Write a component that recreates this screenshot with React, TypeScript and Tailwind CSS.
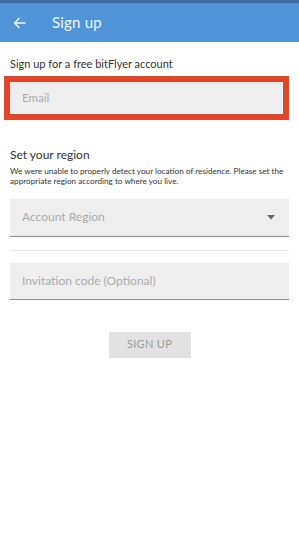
function App() {
  return (
    <div className="w-[299px] h-[544px] bg-white flex flex-col" style={{ fontFamily: "Lato, 'Open Sans', sans-serif" }}>
      <div className="h-[3px] bg-[#3d6d9f]" />
      <header className="h-[39px] bg-[#4f95d8] flex items-center">
        <svg className="ml-[13px]" width="13" height="12" viewBox="0 0 13 12" fill="none" stroke="#eaf3fc" strokeWidth="1.6" strokeLinecap="round" strokeLinejoin="round">
          <path d="M12 6H1.5M6 1.5L1.5 6L6 10.5" />
        </svg>
        <h1 className="ml-[26px] text-[15px] text-[#eef5fd] tracking-[0.2px]">Sign up</h1>
      </header>
      <p className="mt-[14px] ml-[10px] text-[11px] text-[#333]">Sign up for a free bitFlyer account</p>
      <div className="mt-[3px] mx-[4px] w-[285px] h-[44px] border-[6px] border-[#e1462b] bg-[#eeeeee] flex items-center px-[12px]">
        <span className="text-[11.5px] text-[#acacac]">Email</span>
      </div>
      <div className="mx-[10px] mt-[26px]">
        <h2 className="text-[12px] text-[#333]">Set your region</h2>
        <p className="mt-[2px] text-[8.2px] leading-[10px] text-[#333]">
          We were unable to properly detect your location of residence. Please set the appropriate region according to where you live.
        </p>
        <div className="mt-[13px] h-[38px] bg-[#eeeeee] border-b border-[#8d8d8d] flex items-center justify-between px-[12px]">
          <span className="text-[12px] text-[#acacac]">Account Region</span>
          <svg width="8" height="5" viewBox="0 0 8 5" className="mr-[2px]">
            <path d="M0 0H8L4 4.5Z" fill="#666" />
          </svg>
        </div>
        <div className="mt-[13px] h-px bg-[#e6e6e6]" />
        <div className="mt-[12px] h-[37px] bg-[#eeeeee] border-b border-[#8d8d8d] flex items-center px-[12px]">
          <span className="text-[12px] text-[#acacac]">Invitation code (Optional)</span>
        </div>
      </div>
      <div className="mt-[32px] flex justify-center">
        <button className="w-[82px] h-[26px] bg-[#e2e2e2] text-[11px] text-[#9d9d9d] tracking-[0.3px]">SIGN UP</button>
      </div>
    </div>
  );
}

export default App;
